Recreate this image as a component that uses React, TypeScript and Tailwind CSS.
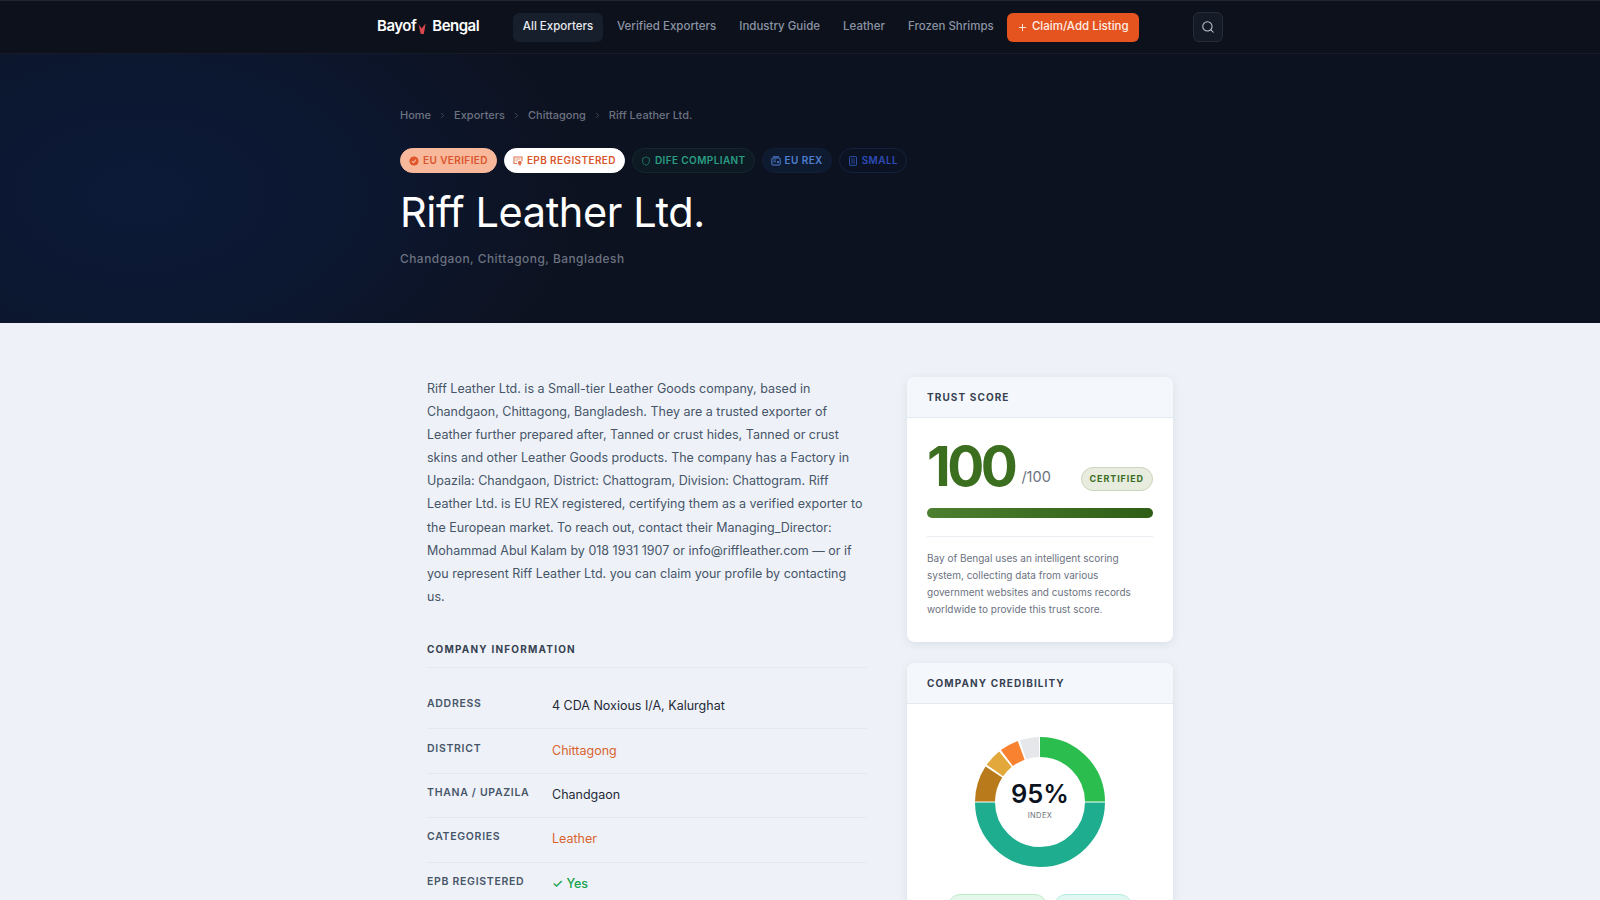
import React from "react";
import { Search, Plus, ChevronRight, Shield } from "lucide-react";

const font = { fontFamily: "Inter, 'Liberation Sans', sans-serif" };

function polar(r: number, a: number) {
  const t = ((a - 90) * Math.PI) / 180;
  return [65 + r * Math.cos(t), 65 + r * Math.sin(t)];
}
function Arc({ from, to, color }: { from: number; to: number; color: string }) {
  const [x1, y1] = polar(55, from);
  const [x2, y2] = polar(55, to);
  const large = to - from > 180 ? 1 : 0;
  return <path d={`M${x1} ${y1} A55 55 0 ${large} 1 ${x2} ${y2}`} fill="none" stroke={color} strokeWidth="20" />;
}

function Pill({ cls, icon, children }: { cls: string; icon: React.ReactNode; children: React.ReactNode }) {
  return (
    <span className={`inline-flex items-center gap-[4px] h-[25px] px-[8px] rounded-full text-[10px] font-semibold tracking-[0.4px] border whitespace-nowrap ${cls}`}>
      {icon}
      {children}
    </span>
  );
}

function Row({ label, children, last }: { label: string; children: React.ReactNode; last?: boolean }) {
  return (
    <div className={`flex h-[44.4px] items-center ${last ? "" : "border-b border-[#e2e8f0]"}`}>
      <div className="w-[125px] shrink-0 text-[10.5px] font-semibold tracking-[0.7px] text-[#475569] -mt-[5px]">{label}</div>
      <div className="text-[12.5px]">{children}</div>
    </div>
  );
}

export default function App() {
  return (
    <div style={font} className="h-[900px] overflow-hidden bg-[#eef2f8]">
      <header className="h-[54px] bg-[#0c111b] border-t border-[#1e2533] border-b border-b-[#151b29]">
        <div className="w-[846px] ml-[377px] h-full flex items-center">
          <div className="flex items-center w-[136px] text-white text-[15px] font-semibold tracking-[-0.5px] -mt-[2px]">
            <span>Bayof</span>
            <svg width="9" height="12" viewBox="0 0 10 13" className="mx-[2px] mt-[6px]">
              <path d="M0.5 1 L4 6 L8.5 0.5 L6.5 12 L3 12 Z" fill="#d9474c" />
            </svg>
            <span className="ml-[3px]">Bengal</span>
          </div>
          <nav className="flex items-center gap-[3px] text-[11.5px] font-medium text-[#8b93a3] whitespace-nowrap">
            <a className="h-[29px] w-[90px] mr-[1px] flex items-center justify-center rounded-md bg-[#171e2c] text-[#e8ebf0]">All Exporters</a>
            <a className="px-[10px]">Verified Exporters</a>
            <a className="px-[10px]">Industry Guide</a>
            <a className="px-[10px]">Leather</a>
            <a className="px-[10px]">Frozen Shrimps</a>
          </nav>
          <button className="ml-[3px] h-[29px] w-[132px] rounded-md bg-[#e5531f] text-[#fdeee6] text-[11.5px] font-medium flex items-center justify-center gap-[4px] whitespace-nowrap">
            <Plus size={11} strokeWidth={2} />
            Claim/Add Listing
          </button>
          <button className="ml-[54px] h-[30px] w-[30px] rounded-md bg-[#141a26] border border-[#252c3a] flex items-center justify-center text-[#c5cad3]">
            <Search size={14} strokeWidth={1.75} />
          </button>
        </div>
      </header>

      <section className="h-[269px] pl-[400px] pt-[55px] bg-[radial-gradient(ellipse_440px_270px_at_140px_140px,#0c1a38_0%,#0c1730_50%,#0d1220_100%)]">
        <div className="flex items-center h-[13px] text-[11px] text-[#6b7280] font-medium">
          <span>Home</span>
          <ChevronRight size={9} className="mx-[7px] text-[#4b5563]" />
          <span>Exporters</span>
          <ChevronRight size={9} className="mx-[7px] text-[#4b5563]" />
          <span>Chittagong</span>
          <ChevronRight size={9} className="mx-[7px] text-[#4b5563]" />
          <span>Riff Leather Ltd.</span>
        </div>
        <div className="flex items-center gap-[7px] mt-[26px]">
          <Pill
            cls="bg-[#f8b89c] border-[#f8b89c] text-[#d9552b]"
            icon={
              <svg width="10" height="10" viewBox="0 0 10 10">
                <circle cx="5" cy="5" r="4.6" fill="#e0552a" />
                <path d="M2.9 5.1 L4.4 6.6 L7.1 3.6" fill="none" stroke="#f8b89c" strokeWidth="1.2" />
              </svg>
            }
          >
            EU VERIFIED
          </Pill>
          <Pill
            cls="bg-white border-white text-[#d9552b]"
            icon={
              <svg width="10" height="10" viewBox="0 0 10 10" fill="none" stroke="#e0734f" strokeWidth="1.1">
                <path d="M4 7.5 H1 V1 H9 V5" />
                <path d="M2.5 3 H7.5 M2.5 4.8 H4.5" strokeWidth="0.8" />
                <circle cx="6.8" cy="6.6" r="1.9" fill="#e0734f" stroke="none" />
                <path d="M5.8 8 V9.8 L6.8 9 L7.8 9.8 V8" fill="#e0734f" stroke="none" />
              </svg>
            }
          >
            EPB REGISTERED
          </Pill>
          <Pill cls="bg-[#0d1a24] border-[#14272e] text-[#2a9d82]" icon={<Shield size={10} strokeWidth={1.6} />}>
            DIFE COMPLIANT
          </Pill>
          <Pill
            cls="bg-[#0e1a30] border-[#121f38] text-[#4f7fd0]"
            icon={
              <svg width="10" height="10" viewBox="0 0 10 10" fill="none" stroke="#4f7fd0" strokeWidth="1">
                <rect x="0.8" y="2" width="8.4" height="7" rx="1" />
                <path d="M2 0.8 H8" />
                <path d="M2.2 4 H5 M2.2 5.8 H5" strokeWidth="0.8" />
                <circle cx="7" cy="6" r="1.1" fill="#4f7fd0" stroke="none" />
              </svg>
            }
          >
            EU REX
          </Pill>
          <Pill
            cls="bg-[#0b1322] border-[#14213f] text-[#2f4bb8]"
            icon={
              <svg width="10" height="10" viewBox="0 0 10 10" fill="none" stroke="#2f55b8" strokeWidth="0.9">
                <rect x="1.5" y="0.6" width="7" height="8.8" rx="0.6" />
                <path d="M3 3 H7 M3 5 H7 M3 7 H7" strokeWidth="0.7" />
              </svg>
            }
          >
            SMALL
          </Pill>
        </div>
        <h1 className="mt-[13px] text-[41.5px] leading-[52px] font-normal text-white tracking-[-0.4px] whitespace-nowrap">Riff Leather Ltd.</h1>
        <p className="mt-[12px] text-[11.9px] font-medium text-[#6b7280] tracking-[0.5px]">Chandgaon, Chittagong, Bangladesh</p>
      </section>

      <main className="flex pl-[427px] pt-[54px]">
        <div className="w-[440px]">
          <p className="text-[12.5px] leading-[23.1px] text-[#475569]">
            Riff Leather Ltd. is a Small-tier Leather Goods company, based in Chandgaon, Chittagong, Bangladesh. They are a trusted exporter of Leather further prepared after, Tanned or crust hides, Tanned or crust skins and other Leather Goods products. The company has a Factory in Upazila: Chandgaon, District: Chattogram, Division: Chattogram. Riff Leather Ltd. is EU REX registered, certifying them as a verified exporter to the European market. To reach out, contact their Managing_Director: Mohammad Abul Kalam by 018 1931 1907 or info@riffleather.com — or if you represent Riff Leather Ltd. you can claim your profile by contacting us.
          </p>
          <h2 className="mt-[34px] pb-[10px] text-[10px] font-bold tracking-[1.2px] text-[#374151] border-b border-[#e2e8f0]">COMPANY INFORMATION</h2>
          <div className="mt-[17px]">
            <Row label="ADDRESS"><span className="text-[#1f2937]">4 CDA Noxious I/A, Kalurghat</span></Row>
            <Row label="DISTRICT"><span className="text-[#d9622f]">Chittagong</span></Row>
            <Row label="THANA / UPAZILA"><span className="text-[#1f2937]">Chandgaon</span></Row>
            <Row label="CATEGORIES"><span className="text-[#d9622f]">Leather</span></Row>
            <Row label="EPB REGISTERED" last><span className="text-[#16a34a] font-medium">✓ Yes</span></Row>
          </div>
        </div>

        <aside className="ml-[40px] w-[266px] flex flex-col gap-[21px]">
          <div className="rounded-[8px] bg-white shadow-[0_2px_10px_rgba(15,23,42,0.09)] overflow-hidden">
            <div className="h-[41px] flex items-center px-[20px] bg-[#f4f8fc] border-b border-[#e5eaf1] text-[10px] font-bold tracking-[1.1px] text-[#374151]">TRUST SCORE</div>
            <div className="px-[20px] pt-[19px] pb-[24px]">
              <div className="flex items-end">
                <span className="text-[55px] leading-[58px] font-bold tracking-[-3.5px] text-[#3c6e1f]">100</span>
                <span className="ml-[7px] mb-[7px] text-[14.5px] text-[#6b7280]">/100</span>
                <span className="ml-auto mb-[4px] h-[24px] px-[8px] flex items-center rounded-full bg-[#e7ecdf] border border-[#ccd6bd] text-[9px] font-bold tracking-[0.9px] text-[#3c6e1f]">CERTIFIED</span>
              </div>
              <div className="mt-[13px] h-[10px] rounded-full bg-[linear-gradient(90deg,#4d7f30,#2f5d16)]" />
              <div className="mt-[18px] border-t border-[#e9edf2]" />
              <p className="mt-[13px] text-[10px] leading-[17px] text-[#6b7280]">Bay of Bengal uses an intelligent scoring system, collecting data from various government websites and customs records worldwide to provide this trust score.</p>
            </div>
          </div>

          <div className="rounded-[8px] bg-white shadow-[0_2px_10px_rgba(15,23,42,0.09)] overflow-hidden">
            <div className="h-[41px] flex items-center px-[20px] bg-[#f4f8fc] border-b border-[#e5eaf1] text-[10px] font-bold tracking-[1.1px] text-[#374151]">COMPANY CREDIBILITY</div>
            <div className="pt-[33px] flex flex-col items-center">
              <div className="relative w-[130px] h-[130px]">
                <svg width="130" height="130" viewBox="0 0 130 130">
                  <Arc from={0} to={89.5} color="#2bbd4e" />
                  <Arc from={90.5} to={269.5} color="#1fad8f" />
                  <Arc from={270.5} to={303} color="#b97a1c" />
                  <Arc from={305} to={321} color="#e2a83b" />
                  <Arc from={323} to={340} color="#f98231" />
                  <Arc from={342} to={359} color="#e5e7eb" />
                </svg>
                <div className="absolute inset-0 flex flex-col items-center justify-center pb-[3px]">
                  <span className="text-[25.5px] leading-[30px] font-semibold text-[#0b1220]">95%</span>
                  <span className="text-[7.5px] tracking-[0.4px] text-[#6b7280] mt-[1px]">INDEX</span>
                </div>
              </div>
              <div className="mt-[27px] flex gap-[7px]">
                <span className="w-[99px] h-[24px] rounded-full bg-[#e3f8ea] border border-[#bdeccb]" />
                <span className="w-[78px] h-[24px] rounded-full bg-[#e0f7f2] border border-[#b8ebdf]" />
              </div>
            </div>
          </div>
        </aside>
      </main>
    </div>
  );
}
